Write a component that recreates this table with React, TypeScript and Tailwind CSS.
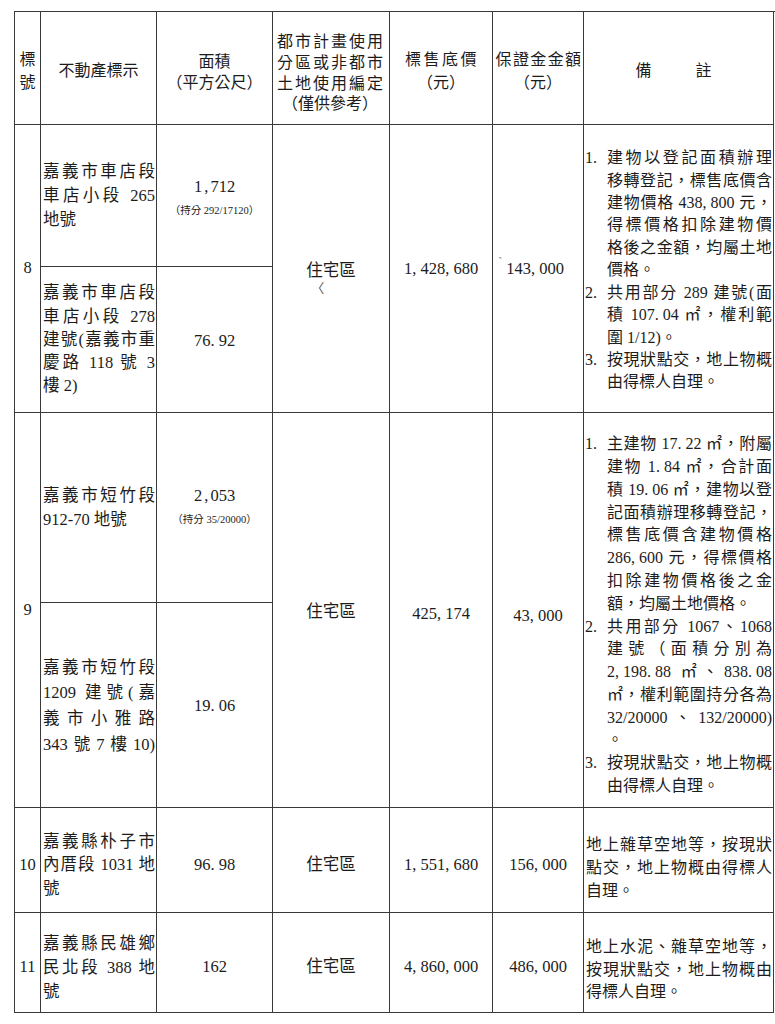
import React from "react";

// cell edge: right + bottom border, the grid itself carries top + left
const cell = "border-r border-b border-[#3a3a3a] flex flex-col justify-center";

// latin punctuation in the scan is half-width (monospaced), keep that spacing
function T({ s }: { s: string }) {
  const parts = s.split(/([,.])/);
  return (
    <span>
      {parts.map((p, i) =>
        p === "," || p === "." ? (
          <span key={i} className="inline-block w-[0.5em]">
            {p}
          </span>
        ) : (
          <span key={i}>{p}</span>
        )
      )}
    </span>
  );
}

function P({
  lines,
  fullLast = false,
  className = "",
}: {
  lines: string[];
  fullLast?: boolean;
  className?: string;
}) {
  return (
    <div className={className}>
      {lines.map((l, i) => (
        <div
          key={i}
          className={
            i < lines.length - 1 || fullLast
              ? "text-justify [text-align-last:justify]"
              : "text-left"
          }
        >
          <T s={l} />
        </div>
      ))}
    </div>
  );
}

function Item({ n, lines }: { n: string; lines: string[] }) {
  return (
    <div className="flex">
      <div className="w-[22px] shrink-0">
        <T s={n + "."} />
      </div>
      <P lines={lines} className="flex-1 min-w-0" />
    </div>
  );
}

function Area({ value, share }: { value: string; share?: string }) {
  return (
    <div className="text-center leading-[24px]">
      <div>
        <T s={value} />
      </div>
      {share && <div className="text-[10.5px] leading-[24px]">{share}</div>}
    </div>
  );
}

export default function App() {
  return (
    <div className="w-[775px] h-[1024px] overflow-hidden bg-white pl-[14px] pt-[11px] text-[#1c1c1c] [font-family:'Liberation_Serif','Noto_Sans_CJK_TC',serif]">
      <div className="grid grid-cols-[26px_116px_116px_117px_103px_91px_190px] grid-rows-[113px_142px_146px_190px_205px_105px_100px] border-l border-t border-[#3a3a3a] text-[16.5px]">
        {/* header */}
        <div className={`${cell} items-center pt-[6px] text-[16px] leading-[23px]`}>
          <div>標</div>
          <div>號</div>
        </div>
        <div className={`${cell} items-center pt-[6px] text-[16px]`}>不動產標示</div>
        <div className={`${cell} items-center pt-[8px] text-[16px] leading-[21px]`}>
          <div>面積</div>
          <div>（平方公尺）</div>
        </div>
        <div className={`${cell} pt-[11px] pl-[4px] pr-[6px] text-[16px] leading-[20.7px]`}>
          <P lines={["都市計畫使用", "分區或非都市", "土地使用編定"]} fullLast />
          <div className="text-center">（僅供參考）</div>
        </div>
        <div className={`${cell} items-center pt-[6px] text-[16px] leading-[23px]`}>
          <div className="tracking-[2.5px] pl-[2px]">標售底價</div>
          <div>（元）</div>
        </div>
        <div className={`${cell} items-center pt-[6px] text-[16px] leading-[23px]`}>
          <div className="tracking-[1.4px] pl-[2px]">保證金金額</div>
          <div>（元）</div>
        </div>
        <div className={`${cell} pt-[6px] text-[16px]`}>
          <div className="flex justify-center gap-[44px] pr-[10px]">
            <span>備</span>
            <span>註</span>
          </div>
        </div>

        {/* 8 */}
        <div className={`${cell} row-span-2 items-center`}>8</div>
        <div className={`${cell} pl-[2px] pr-[1px] leading-[24px]`}>
          <P lines={["嘉義市車店段", "車店小段 265", "地號"]} />
        </div>
        <div className={`${cell} pt-[6px]`}>
          <Area value="1,712" share="（持分 292/17120）" />
        </div>
        <div className={`${cell} row-span-2 items-center pt-[6px]`}>
          <div className="relative">
            住宅區
            <span className="absolute left-[5px] top-[20px] text-[13px] text-[#555]">〈</span>
          </div>
        </div>
        <div className={`${cell} row-span-2 items-center pt-[2px]`}>
          <T s="1,428,680" />
        </div>
        <div className={`${cell} row-span-2 items-center pt-[2px]`}>
          <div className="relative pr-[6px]">
            <span className="absolute -left-[8px] -top-[4px] text-[12px] text-[#777]">`</span>
            <T s="143,000" />
          </div>
        </div>
        <div className={`${cell} row-span-2 pl-[1px] pr-[1px] pt-[4px] text-[16px] leading-[22.4px]`}>
          <Item
            n="1"
            lines={[
              "建物以登記面積辦理",
              "移轉登記，標售底價含",
              "建物價格 438,800 元，",
              "得標價格扣除建物價",
              "格後之金額，均屬土地",
              "價格。",
            ]}
          />
          <Item n="2" lines={["共用部分 289 建號(面", "積 107.04 ㎡，權利範", "圍 1/12)。"]} />
          <Item n="3" lines={["按現狀點交，地上物概", "由得標人自理。"]} />
        </div>
        <div className={`${cell} pl-[2px] pr-[1px] leading-[23.3px]`}>
          <P lines={["嘉義市車店段", "車店小段 278", "建號(嘉義市重", "慶路 118 號 3", "樓 2)"]} />
        </div>
        <div className={`${cell} items-center pt-[4px]`}>
          <T s="76.92" />
        </div>

        {/* 9 */}
        <div className={`${cell} row-span-2 items-center`}>9</div>
        <div className={`${cell} pl-[2px] pr-[1px] leading-[24px]`}>
          <P lines={["嘉義市短竹段", "912-70 地號"]} />
        </div>
        <div className={`${cell} pt-[1px]`}>
          <Area value="2,053" share="（持分 35/20000）" />
        </div>
        <div className={`${cell} row-span-2 items-center pt-[5px]`}>住宅區</div>
        <div className={`${cell} row-span-2 items-center pt-[9px]`}>
          <T s="425,174" />
        </div>
        <div className={`${cell} row-span-2 items-center pt-[13px]`}>
          <T s="43,000" />
        </div>
        <div className={`${cell} row-span-2 pl-[1px] pr-[1px] pt-[11px] text-[16px] leading-[22.8px]`}>
          <Item
            n="1"
            lines={[
              "主建物 17.22 ㎡，附屬",
              "建物 1.84 ㎡，合計面",
              "積 19.06 ㎡，建物以登",
              "記面積辦理移轉登記，",
              "標售底價含建物價格",
              "286,600 元，得標價格",
              "扣除建物價格後之金",
              "額，均屬土地價格。",
            ]}
          />
          <Item
            n="2"
            lines={[
              "共用部分 1067、1068",
              "建號（面積分別為",
              "2,198.88 ㎡、838.08",
              "㎡，權利範圍持分各為",
              "32/20000、132/20000)",
              "。",
            ]}
          />
          <Item n="3" lines={["按現狀點交，地上物概", "由得標人自理。"]} />
        </div>
        <div className={`${cell} pl-[2px] pr-[1px] pt-[2px] leading-[25.7px]`}>
          <P lines={["嘉義市短竹段", "1209 建號(嘉", "義市小雅路", "343號7樓10)"]} fullLast />
        </div>
        <div className={`${cell} items-center pt-[3px]`}>
          <T s="19.06" />
        </div>

        {/* 10 */}
        <div className={`${cell} items-center pt-[10px]`}>10</div>
        <div className={`${cell} pl-[2px] pr-[1px] pt-[10px] leading-[23.5px]`}>
          <P lines={["嘉義縣朴子市", "內厝段 1031 地", "號"]} />
        </div>
        <div className={`${cell} items-center pt-[10px]`}>
          <T s="96.98" />
        </div>
        <div className={`${cell} items-center pt-[10px]`}>住宅區</div>
        <div className={`${cell} items-center pt-[10px]`}>
          <T s="1,551,680" />
        </div>
        <div className={`${cell} items-center pt-[10px]`}>
          <T s="156,000" />
        </div>
        <div className={`${cell} pl-[2px] pr-[1px] pt-[15px] text-[16px] leading-[23px]`}>
          <P lines={["地上雜草空地等，按現狀", "點交，地上物概由得標人", "自理。"]} />
        </div>

        {/* 11 */}
        <div className={`${cell} items-center pt-[10px]`}>11</div>
        <div className={`${cell} pl-[2px] pr-[1px] pt-[10px] leading-[24px]`}>
          <P lines={["嘉義縣民雄鄉", "民北段 388 地", "號"]} />
        </div>
        <div className={`${cell} items-center pt-[10px]`}>162</div>
        <div className={`${cell} items-center pt-[10px]`}>住宅區</div>
        <div className={`${cell} items-center pt-[10px]`}>
          <T s="4,860,000" />
        </div>
        <div className={`${cell} items-center pt-[10px]`}>
          <T s="486,000" />
        </div>
        <div className={`${cell} pl-[2px] pr-[1px] pt-[15px] text-[16px] leading-[22.5px]`}>
          <P lines={["地上水泥、雜草空地等，", "按現狀點交，地上物概由", "得標人自理。"]} />
        </div>
      </div>
    </div>
  );
}
